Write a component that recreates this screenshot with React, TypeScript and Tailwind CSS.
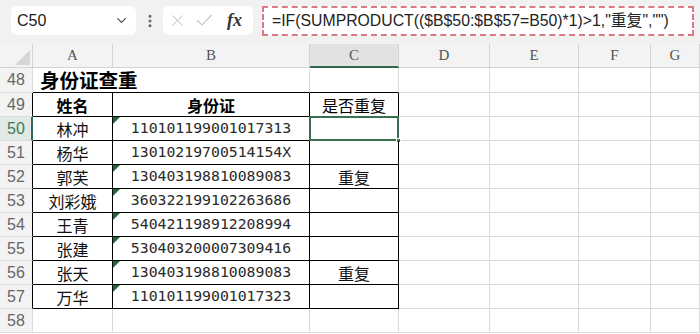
import { Check, ChevronDown, EllipsisVertical, X } from 'lucide-react';

type Row = {
  n: number;
  name?: string;
  id?: string;
  dup?: string;
  tri?: boolean;
};

const rows: Row[] = [
  { n: 50, name: '林冲', id: '110101199001017313', tri: true },
  { n: 51, name: '杨华', id: '13010219700514154X' },
  { n: 52, name: '郭芙', id: '130403198810089083', dup: '重复', tri: true },
  { n: 53, name: '刘彩娥', id: '360322199102263686', tri: true },
  { n: 54, name: '王青', id: '540421198912208994', tri: true },
  { n: 55, name: '张建', id: '530403200007309416', tri: true },
  { n: 56, name: '张天', id: '130403198810089083', dup: '重复', tri: true },
  { n: 57, name: '万华', id: '110101199001017323', tri: true },
];

const cjk = "font-['Noto_Sans_CJK_SC',sans-serif]";
const rowNum = "flex items-center pl-[7px] text-[16px] text-[#666] font-['Liberation_Sans',sans-serif] bg-[#f3f3f3] border-b border-[#dcdcdc]";
const gray = 'border-r border-b border-[#dadada]';

function Blank({ n }: { n: number }) {
  return (
    <>
      {Array.from({ length: n }).map((_, i) => (
        <div key={i} className={gray} />
      ))}
    </>
  );
}

export default function App() {
  return (
    <div className="w-[700px] h-[334px] overflow-hidden bg-white">
      {/* formula bar */}
      <div className="h-[44px] bg-[#f1f1f1] flex items-start pt-[6px]">
        <div className="ml-[11px] w-[125px] h-[29px] bg-white rounded-md flex items-center justify-between pl-[6px] pr-[7px]">
          <span className="text-[16px] text-[#222] font-['Liberation_Sans',sans-serif]">C50</span>
          <ChevronDown size={15} strokeWidth={1.8} className="text-[#444]" />
        </div>
        <div className="w-[27px] h-[29px] flex items-center justify-center">
          <EllipsisVertical size={16} strokeWidth={2.5} className="text-[#666]" />
        </div>
        <div className="w-[90px] h-[29px] bg-white rounded-md flex items-center pl-[5px] gap-[7px]">
          <X size={19} strokeWidth={1.3} className="text-[#c4c4c4]" />
          <Check size={21} strokeWidth={1.3} className="text-[#c4c4c4]" />
          <span className="ml-[5px] text-[18px] italic font-bold text-[#333] font-['Liberation_Serif',serif]">fx</span>
        </div>
        <div className="ml-[9px] w-[432px] h-[30px] bg-white border-2 border-dashed border-[#da7a84] flex items-center pl-[8px]">
          <span className="text-[15.8px] text-[#222] font-['Liberation_Sans','Noto_Sans_CJK_SC',sans-serif]">
            =IF(SUMPRODUCT(($B$50:$B$57=B50)*1)&gt;1,"重复","")
          </span>
        </div>
      </div>

      {/* sheet */}
      <div className="grid grid-cols-[33px_80px_197px_89px_91px_89px_72px_49px] grid-rows-[24px_25px_repeat(10,24px)]">
        {/* column headers */}
        <div className="relative bg-[#f3f3f3] border-r border-b border-[#d4d4d4]">
          <div className="absolute right-[2px] bottom-[2px] w-[15px] h-[15px] bg-[#d6d6d6] [clip-path:polygon(100%_0,100%_100%,0_100%)]" />
        </div>
        {['A', 'B', 'C', 'D', 'E', 'F', 'G'].map((c) => (
          <div
            key={c}
            className={
              c === 'C'
                ? "flex items-center justify-center bg-[#e2e2e2] border-r border-[#d4d4d4] border-b-2 border-b-[#2f6b4b] text-[15px] text-[#555] font-['Liberation_Serif',serif]"
                : "flex items-center justify-center bg-[#f3f3f3] border-r border-b border-[#d4d4d4] text-[15px] text-[#555] font-['Liberation_Serif',serif]"
            }
          >
            {c}
          </div>
        ))}

        {/* 48 */}
        <div className={`${rowNum} border-r border-r-[#dcdcdc]`}>48</div>
        <div className={`col-span-2 flex items-center pl-[7px] border-b border-black border-r border-r-[#dadada] text-[19.5px] font-bold text-black ${cjk}`}>
          身份证查重
        </div>
        <div className="border-r border-b border-r-[#dadada] border-b-black" />
        <Blank n={4} />

        {/* 49 */}
        <div className={`${rowNum} border-r border-r-black`}>49</div>
        <div className={`flex items-center justify-center border-r border-b border-black text-[16px] font-bold text-black ${cjk}`}>姓名</div>
        <div className={`flex items-center justify-center border-r border-b border-black text-[16px] font-bold text-black ${cjk}`}>身份证</div>
        <div className={`flex items-center justify-center border-r border-b border-black text-[16px] text-black ${cjk}`}>是否重复</div>
        <Blank n={4} />

        {rows.map((r) => (
          <Line key={r.n} r={r} />
        ))}

        {/* 58 */}
        <div className={`${rowNum} border-r border-r-[#dcdcdc]`}>58</div>
        <Blank n={7} />
      </div>
    </div>
  );
}

function Line({ r }: { r: Row }) {
  const sel = r.n === 50;
  return (
    <>
      <div
        className={
          sel
            ? "flex items-center pl-[7px] text-[16px] text-[#3e7a5a] font-['Liberation_Sans',sans-serif] bg-[#e1e9e4] border-b border-[#dcdcdc] border-r-2 border-r-[#2f6b4b]"
            : `${rowNum} border-r border-r-black`
        }
      >
        {r.n}
      </div>
      <div className={`flex items-center justify-center border-r border-b border-black text-[16px] text-[#111] ${cjk}`}>{r.name}</div>
      <div className="relative flex items-center justify-center border-r border-b border-black text-[14.8px] text-[#2a2a2a] font-['DejaVu_Sans_Mono',monospace]">
        {r.tri && (
          <div className="absolute left-0 top-0 w-[7px] h-[7px] bg-[#1f6a3c] [clip-path:polygon(0_0,100%_0,0_100%)]" />
        )}
        {r.id}
      </div>
      <div className={`relative flex items-center justify-center border-r border-b border-black text-[16px] text-[#111] ${cjk}`}>
        {r.dup}
        {sel && (
          <>
            <div className="absolute -left-[1px] -top-[1px] -right-[1px] -bottom-[1px] border-2 border-[#3b6f52]" />
            <div className="absolute -right-[3px] -bottom-[3px] w-[5px] h-[5px] bg-[#3b6f52] border border-white" />
          </>
        )}
      </div>
      <Blank n={4} />
    </>
  );
}
